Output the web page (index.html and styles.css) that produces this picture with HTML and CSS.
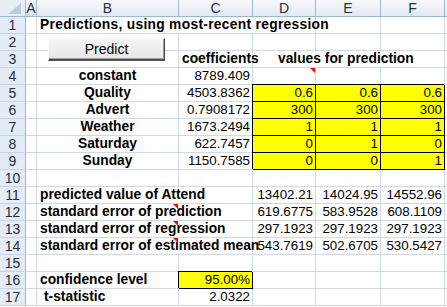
FILE: index.html
```html
<!DOCTYPE html>
<html>
<head>
<meta charset="utf-8">
<link rel="stylesheet" href="styles.css">
</head>
<body>
<div class="sheet">
  <div class="h corner"><svg width="25" height="16" viewBox="0 0 25 16"><polygon points="21,3 21,14 8,14" fill="#bccbe0"/></svg></div>
  <div class="h">A</div><div class="h">B</div><div class="h">C</div><div class="h">D</div><div class="h">E</div><div class="h">F</div><div class="h"></div>

  <div class="rn">1</div><div class="c"></div><div class="c b s3 title">Predictions, using most-recent regression</div><div class="c"></div><div class="c"></div><div class="c"></div>

  <div class="rn">2</div><div class="c"></div><div class="c"></div><div class="c"></div><div class="c"></div><div class="c"></div><div class="c"></div><div class="c"></div>

  <div class="rn">3</div><div class="c"></div><div class="c"></div><div class="c b r">coefficients</div><div class="c b s3 vals">values for prediction</div><div class="c"></div>

  <div class="rn">4</div><div class="c"></div><div class="c b ctr">constant</div><div class="c r">8789.409</div><div class="c note"></div><div class="c"></div><div class="c"></div><div class="c"></div>

  <div class="rn">5</div><div class="c"></div><div class="c b ctr">Quality</div><div class="c r">4503.8362</div><div class="c r y">0.6</div><div class="c r y">0.6</div><div class="c r y">0.6</div><div class="c"></div>

  <div class="rn">6</div><div class="c"></div><div class="c b ctr">Advert</div><div class="c r">0.7908172</div><div class="c r y">300</div><div class="c r y">300</div><div class="c r y">300</div><div class="c"></div>

  <div class="rn">7</div><div class="c"></div><div class="c b ctr">Weather</div><div class="c r">1673.2494</div><div class="c r y">1</div><div class="c r y">1</div><div class="c r y">1</div><div class="c"></div>

  <div class="rn">8</div><div class="c"></div><div class="c b ctr">Saturday</div><div class="c r">622.7457</div><div class="c r y">0</div><div class="c r y">1</div><div class="c r y">0</div><div class="c"></div>

  <div class="rn">9</div><div class="c"></div><div class="c b ctr">Sunday</div><div class="c r">1150.7585</div><div class="c r y">0</div><div class="c r y">0</div><div class="c r y">1</div><div class="c"></div>

  <div class="rn">10</div><div class="c"></div><div class="c"></div><div class="c"></div><div class="c"></div><div class="c"></div><div class="c"></div><div class="c"></div>

  <div class="rn">11</div><div class="c"></div><div class="c b s2">predicted value of Attend</div><div class="c r">13402.21</div><div class="c r">14024.95</div><div class="c r">14552.96</div><div class="c"></div>

  <div class="rn">12</div><div class="c"></div><div class="c b s2 bnote">standard error of prediction</div><div class="c r">619.6775</div><div class="c r">583.9528</div><div class="c r">608.1109</div><div class="c"></div>

  <div class="rn">13</div><div class="c"></div><div class="c b s2 bnote">standard error of regression</div><div class="c r">297.1923</div><div class="c r">297.1923</div><div class="c r">297.1923</div><div class="c"></div>

  <div class="rn">14</div><div class="c"></div><div class="c b s2 bnote">standard error of estimated mean</div><div class="c r">543.7619</div><div class="c r">502.6705</div><div class="c r">530.5427</div><div class="c"></div>

  <div class="rn">15</div><div class="c"></div><div class="c"></div><div class="c"></div><div class="c"></div><div class="c"></div><div class="c"></div><div class="c"></div>

  <div class="rn">16</div><div class="c"></div><div class="c b">confidence level</div><div class="c r y">95.00%</div><div class="c"></div><div class="c"></div><div class="c"></div><div class="c"></div>

  <div class="rn">17</div><div class="c"></div><div class="c b tstat">t-statistic</div><div class="c r">2.0322</div><div class="c"></div><div class="c"></div><div class="c"></div><div class="c"></div>

  <button class="btn" type="button">Predict</button>
</div>
</body>
</html>
```

FILE: styles.css
```css
html, body {
  margin: 0;
  padding: 0;
  background: #ffffff;
}

.sheet {
  position: relative;
  display: grid;
  grid-template-columns: 26px 11px 142px 74px 63px 65px 64px 1fr;
  grid-auto-rows: 17px;
  width: 447px;
  font-family: "Liberation Sans", Arial, sans-serif;
  font-size: 13.33px;
  color: #000;
  overflow: hidden;
}

.h {
  box-sizing: border-box;
  border-right: 1px solid #9eb6ce;
  border-bottom: 1px solid #9eb6ce;
  background: linear-gradient(#f7f9fc, #e3e9f2);
  text-align: center;
  line-height: 16px;
  color: #27313f;
  font-size: 14px;
}

.corner {
  background: #e8eef6;
}

.corner svg {
  display: block;
}

.rn {
  box-sizing: border-box;
  border-right: 1px solid #9eb6ce;
  border-bottom: 1px solid #c5d3e4;
  background: #e4ecf7;
  text-align: center;
  line-height: 16px;
  color: #27313f;
  font-size: 14px;
}

.c {
  position: relative;
  box-sizing: border-box;
  border-right: 1px solid #d0d7e5;
  border-bottom: 1px solid #d0d7e5;
  line-height: 16px;
  padding: 0 3px;
  white-space: nowrap;
}

.b {
  font-weight: bold;
  font-size: 13.8px;
}

.title {
  letter-spacing: 0.3px;
}

.r { text-align: right; padding-right: 2px; }
.ctr { text-align: center; }
.s2 { grid-column: span 2; }
.s3 { grid-column: span 3; }

.vals {
  padding-left: 25px;
}

.tstat {
  padding-left: 7px;
}

.y {
  background: #ffff00;
  border-right-color: #000;
  border-bottom-color: #000;
  box-shadow: -1px -1px 0 0 #000;
}

.note::after,
.bnote::after {
  content: "";
  position: absolute;
  top: 0;
  width: 0;
  height: 0;
  border-top: 5px solid #ff0000;
  border-left: 5px solid transparent;
}

.note::after { right: 0; }
.bnote::after { left: 136px; }

.btn {
  position: absolute;
  left: 48px;
  top: 38px;
  width: 117px;
  height: 23px;
  box-sizing: border-box;
  margin: 0;
  padding: 0;
  font-family: "Liberation Sans", Arial, sans-serif;
  font-size: 14px;
  color: #000;
  background: linear-gradient(#f4f4f4, #e8e8e8);
  border-top: 1px solid #f8f8f8;
  border-left: 1px solid #f8f8f8;
  border-right: 1px solid #404040;
  border-bottom: 2px solid #505050;
  box-shadow: inset -1px -1px 0 #a0a0a0;
  border-radius: 0;
}
```
